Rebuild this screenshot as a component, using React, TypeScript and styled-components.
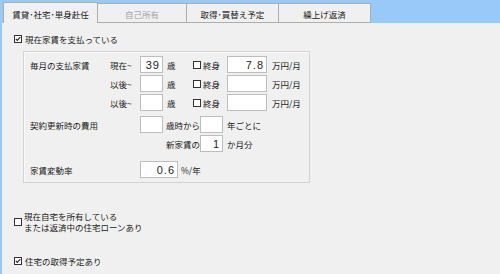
import React from "react";
import styled, { createGlobalStyle } from "styled-components";

const Global = createGlobalStyle`
  html, body { margin: 0; padding: 0; background: #99c9f8; }
  body { font-family: "Noto Sans CJK JP", "Noto Sans", sans-serif; }
  * { box-sizing: border-box; }
`;

const Window = styled.div`
  width: 500px;
  height: 274px;
  display: flex;
  flex-direction: column;
  background: #99c9f8;
  padding-left: 2px;
  font-size: 8.5px;
  color: #1a1a1a;
  overflow: hidden;
`;

const TabBar = styled.div`
  display: flex;
  align-items: flex-end;
  height: 23px;
  padding-left: 1px;
  background: #99c9f8;
`;

const Tab = styled.div<{ $active?: boolean; $disabled?: boolean; $w: number }>`
  width: ${(p) => p.$w}px;
  height: ${(p) => (p.$active ? 21 : 20)}px;
  display: flex;
  align-items: center;
  justify-content: center;
  background: #f0f0f0;
  border: 1px solid #adadad;
  border-bottom: ${(p) => (p.$active ? "none" : "1px solid #adadad")};
  margin-left: -1px;
  color: ${(p) => (p.$disabled ? "#a3a3a3" : "#1a1a1a")};
  position: relative;
  z-index: ${(p) => (p.$active ? 1 : 0)};
  padding-top: 1px;
  &:first-child { margin-left: 0; }
`;

const Content = styled.div`
  flex: 1;
  background: #f0f0f0;
  padding: 11px 0 0 12px;
  display: flex;
  flex-direction: column;
`;

const CheckRow = styled.label<{ $mt?: number }>`
  display: flex;
  align-items: center;
  gap: 3px;
  margin-top: ${(p) => p.$mt ?? 0}px;
  line-height: 10px;
`;

const Box = styled.span`
  width: 8px;
  height: 8px;
  border: 1px solid #333;
  background: #fff;
  flex: none;
  display: flex;
  align-items: center;
  justify-content: center;
`;

const Check = ({ checked }: { checked?: boolean }) => (
  <Box>
    {checked && (
      <svg width="6" height="6" viewBox="0 0 6 6">
        <path d="M0.8 2.8 L2.3 4.4 L5.3 1.2" stroke="#222" strokeWidth="1.1" fill="none" />
      </svg>
    )}
  </Box>
);

const Group = styled.div`
  margin: 7px 0 0 9px;
  width: 287px;
  border: 1px solid #d3d3d3;
  box-shadow: inset 1px 1px 0 #fafafa;
  padding: 4px 0 4px 6px;
  display: flex;
  flex-direction: column;
`;

const Row = styled.div<{ $mt?: number }>`
  display: flex;
  align-items: center;
  height: 17px;
  margin-top: ${(p) => p.$mt ?? 0}px;
`;

const Text = styled.span<{ $w?: number; $right?: boolean; $pl?: number }>`
  ${(p) => (p.$w !== undefined ? `width: ${p.$w}px; flex: none;` : "")}
  text-align: ${(p) => (p.$right ? "right" : "left")};
  padding-left: ${(p) => p.$pl ?? 0}px;
  white-space: nowrap;
`;

const Field = styled.div<{ $w: number }>`
  width: ${(p) => p.$w}px;
  height: 17px;
  flex: none;
  background: #fff;
  border: 1px solid #bdbdbd;
  font-family: "Liberation Sans", Arial, sans-serif;
  font-size: 11px;
  letter-spacing: 1px;
  color: #222;
  display: flex;
  align-items: center;
  justify-content: flex-end;
  padding-right: 2px;
`;

const Lifetime = styled.span`
  width: 37px;
  flex: none;
  display: flex;
  align-items: center;
  gap: 2px;
  padding-left: 3px;
`;

const Spacer = styled.span<{ $w: number }>`
  width: ${(p) => p.$w}px;
  flex: none;
`;

const MultiLabel = styled.span`
  display: flex;
  flex-direction: column;
  line-height: 11px;
  margin-left: -1px;
`;

const rentRows = [
  { prefix: "現在~", age: "39", amount: "7.8" },
  { prefix: "以後~", age: "", amount: "" },
  { prefix: "以後~", age: "", amount: "" },
];

export default function App() {
  return (
    <>
      <Global />
      <Window>
        <TabBar>
          <Tab $active $w={95}>賃貸･社宅･単身赴任</Tab>
          <Tab $disabled $w={90}>自己所有</Tab>
          <Tab $w={93}>取得･買替え予定</Tab>
          <Tab $w={93}>繰上げ返済</Tab>
        </TabBar>
        <Content>
          <CheckRow>
            <Check checked />
            <span>現在家賃を支払っている</span>
          </CheckRow>
          <Group>
            {rentRows.map((r, i) => (
              <Row key={i} $mt={i === 0 ? 0 : 2}>
                <Text $w={80}>{i === 0 ? "毎月の支払家賃" : ""}</Text>
                <Text $w={30}>{r.prefix}</Text>
                <Field $w={23}>{r.age}</Field>
                <Text $w={27} $pl={4}>歳</Text>
                <Lifetime>
                  <Check />
                  <span>終身</span>
                </Lifetime>
                <Field $w={40}>{r.amount}</Field>
                <Text $pl={5}>万円/月</Text>
              </Row>
            ))}
            <Row $mt={5}>
              <Text $w={110}>契約更新時の費用</Text>
              <Field $w={23} />
              <Text $w={37} $pl={3}>歳時から</Text>
              <Field $w={23} />
              <Text $pl={4}>年ごとに</Text>
            </Row>
            <Row $mt={2}>
              <Spacer $w={110} />
              <Text $w={60} $right>新家賃の</Text>
              <Field $w={23}>1</Field>
              <Text $pl={4}>か月分</Text>
            </Row>
            <Row $mt={9}>
              <Text $w={110}>家賃変動率</Text>
              <Field $w={38}>0.6</Field>
              <Text $pl={3}>%/年</Text>
            </Row>
          </Group>
          <CheckRow $mt={28}>
            <Check />
            <MultiLabel>
              <span>現在自宅を所有している</span>
              <span>または返済中の住宅ローンあり</span>
            </MultiLabel>
          </CheckRow>
          <CheckRow $mt={23}>
            <Check checked />
            <span>住宅の取得予定あり</span>
          </CheckRow>
        </Content>
      </Window>
    </>
  );
}
